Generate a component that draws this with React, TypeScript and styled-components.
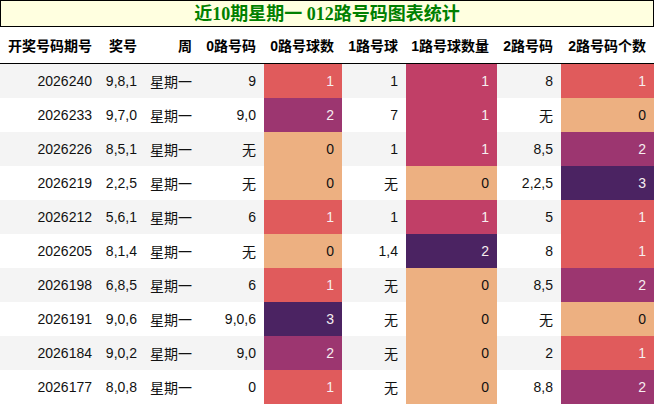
import React from "react";
import styled, { createGlobalStyle } from "styled-components";

const Global = createGlobalStyle`
  html, body { margin: 0; padding: 0; background: #fff; }
  body { font-family: "Liberation Sans", "Noto Sans CJK SC", sans-serif; }
`;

const Page = styled.div`
  width: 654px;
  display: flex;
  flex-direction: column;
`;

const Title = styled.div`
  box-sizing: border-box;
  height: 27px;
  border: 1px solid #000;
  background: #ffffe0;
  color: #008000;
  font-family: "Liberation Serif", "Noto Sans CJK SC", serif;
  font-weight: bold;
  font-size: 18px;
  line-height: 26px;
  text-align: center;
`;

const Table = styled.table`
  width: 654px;
  table-layout: fixed;
  border-collapse: collapse;
  font-size: 14px;
  color: #111;
`;

const HeadCell = styled.th`
  height: 36px;
  padding: 0 8px 0 0;
  text-align: right;
  font-weight: bold;
  white-space: nowrap;
  border-bottom: 1px solid #000;
  color: #000;
`;

const Row = styled.tr<{ $stripe: boolean }>`
  background: ${(p) => (p.$stripe ? "#f4f4f4" : "#ffffff")};
`;

const Cell = styled.td<{ $bg?: string; $light?: boolean }>`
  height: 34px;
  padding: 0 8px 0 0;
  text-align: right;
  white-space: nowrap;
  background: ${(p) => p.$bg ?? "transparent"};
  color: ${(p) => (p.$light ? "#f6eef0" : "#111")};
`;

const widths = [100, 45, 55, 64, 78, 64, 91, 64, 93];
const headers = [
  "开奖号码期号",
  "奖号",
  "周",
  "0路号码",
  "0路号球数",
  "1路号球",
  "1路号球数量",
  "2路号码",
  "2路号码个数",
];

const scale3: Record<number, string> = {
  0: "#edb081",
  1: "#e05b5c",
  2: "#9c3670",
  3: "#4b2362",
};
const scale2: Record<number, string> = {
  0: "#edb081",
  1: "#c13f67",
  2: "#4b2362",
};

type R = [string, string, string, number, string, number, string, number];
const rows: R[] = [
  ["2026240", "9,8,1", "9", 1, "1", 1, "8", 1],
  ["2026233", "9,7,0", "9,0", 2, "7", 1, "无", 0],
  ["2026226", "8,5,1", "无", 0, "1", 1, "8,5", 2],
  ["2026219", "2,2,5", "无", 0, "无", 0, "2,2,5", 3],
  ["2026212", "5,6,1", "6", 1, "1", 1, "5", 1],
  ["2026205", "8,1,4", "无", 0, "1,4", 2, "8", 1],
  ["2026198", "6,8,5", "6", 1, "无", 0, "8,5", 2],
  ["2026191", "9,0,6", "9,0,6", 3, "无", 0, "无", 0],
  ["2026184", "9,0,2", "9,0", 2, "无", 0, "2", 1],
  ["2026177", "8,0,8", "0", 1, "无", 0, "8,8", 2],
];

export default function App() {
  return (
    <Page>
      <Global />
      <Title>近10期星期一 012路号码图表统计</Title>
      <Table>
        <colgroup>
          {widths.map((w, i) => (
            <col key={i} style={{ width: w }} />
          ))}
        </colgroup>
        <thead>
          <tr>
            {headers.map((h) => (
              <HeadCell key={h}>{h}</HeadCell>
            ))}
          </tr>
        </thead>
        <tbody>
          {rows.map((r, i) => (
            <Row key={r[0]} $stripe={i % 2 === 0}>
              <Cell>{r[0]}</Cell>
              <Cell>{r[1]}</Cell>
              <Cell>星期一</Cell>
              <Cell>{r[2]}</Cell>
              <Cell $bg={scale3[r[3]]} $light={r[3] > 0}>{r[3]}</Cell>
              <Cell>{r[4]}</Cell>
              <Cell $bg={scale2[r[5]]} $light={r[5] > 0}>{r[5]}</Cell>
              <Cell>{r[6]}</Cell>
              <Cell $bg={scale3[r[7]]} $light={r[7] > 0}>{r[7]}</Cell>
            </Row>
          ))}
        </tbody>
      </Table>
    </Page>
  );
}
